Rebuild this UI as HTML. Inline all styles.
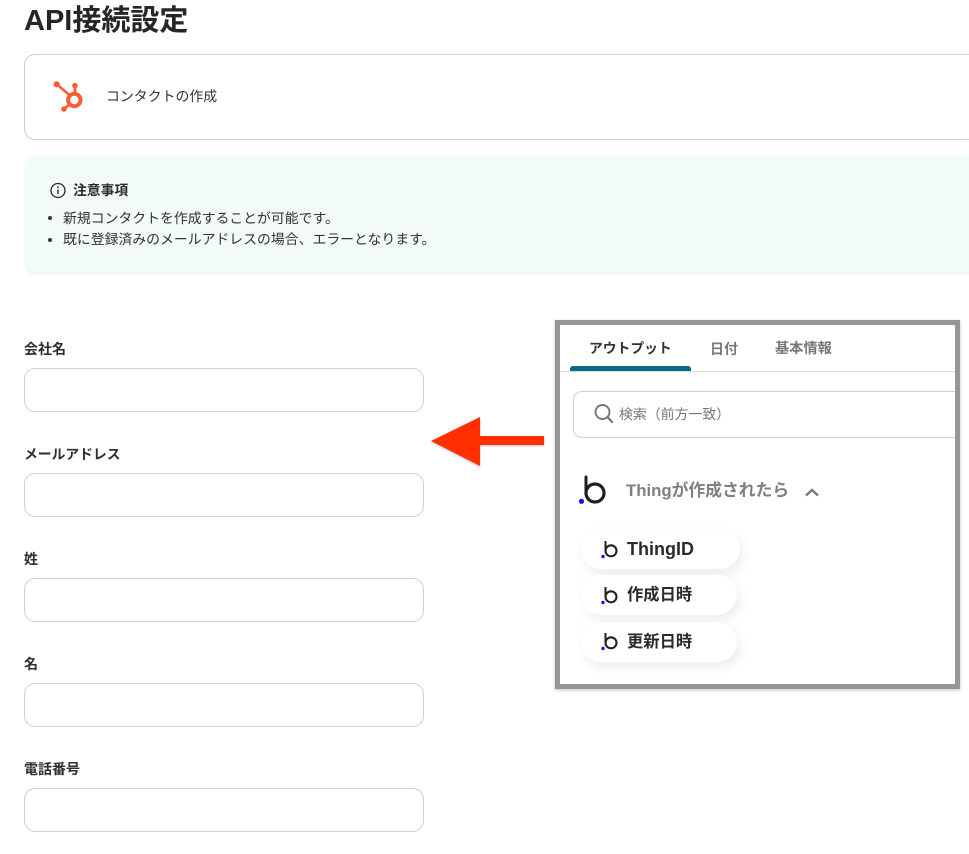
<!DOCTYPE html>
<html lang="ja"><head><meta charset="utf-8"><style>
*{box-sizing:border-box}
html,body{margin:0;padding:0}
body{width:969px;height:854px;overflow:hidden;background:#fff;position:relative;font-family:"Liberation Sans","Noto Sans CJK JP",sans-serif;color:#2b2b2b}
#w{position:absolute;left:0;top:0;width:969px;height:854px;filter:blur(.3px)}
.a{position:absolute;white-space:nowrap}
.lab{left:24px;font-size:14px;font-weight:700;line-height:18px;color:#2e2e2e}
.inp{position:absolute;left:24px;width:400px;height:44px;border:1px solid #cdd0d8;border-radius:11px;background:#fff}
.pill{position:absolute;left:581px;height:40px;border-radius:20px;background:#fff;box-shadow:3px 5px 12px rgba(0,0,0,.08)}
.pt{font-size:16.300px;font-weight:700;line-height:20px;color:#2a2a2a}
.li{left:63px;font-size:13.870px;line-height:20px;color:#333}
.tab{top:340px;font-size:14px;font-weight:700;line-height:18px;color:#777}
</style></head><body><div id="w">
<div class="a" style="left:24px;top:3px;font-size:29px;font-weight:700;line-height:36px;color:#262626">API接続設定</div>
<div class="a" style="left:24px;top:54px;width:980px;height:86px;border:1px solid #cccccc;border-radius:11px"></div>
<svg class="a" style="left:50px;top:78px" width="36" height="36" viewBox="0 0 36 36">
<g fill="none" stroke="#ff5c35" stroke-linecap="round">
<circle cx="24.300" cy="22" r="6.200" stroke-width="4"/>
<path d="M6.700 6.300 L20 17.500" stroke-width="2.600"/>
<path d="M25 7.700 V15" stroke-width="2.800"/>
<path d="M14 31 L20 26" stroke-width="2.600"/>
</g>
<g fill="#ff5c35"><circle cx="6.700" cy="6.300" r="3.100"/><circle cx="25" cy="7.700" r="2.800"/><circle cx="14" cy="31" r="2.800"/></g>
</svg>
<div class="a" style="left:106px;top:86px;font-size:13.900px;line-height:20px;color:#333">コンタクトの作成</div>
<div class="a" style="left:24px;top:156px;width:980px;height:119px;background:#f2fafa;border-radius:11px"></div>
<svg class="a" style="left:50px;top:182px" width="17" height="17" viewBox="0 0 17 17"><circle cx="8" cy="8.500" r="7" fill="none" stroke="#2b2b2b" stroke-width="1.300"/><rect x="7.300" y="7.500" width="1.400" height="4.500" fill="#2b2b2b"/><circle cx="8" cy="5.300" r=".9" fill="#2b2b2b"/></svg>
<div class="a" style="left:73px;top:182px;font-size:13.800px;font-weight:700;line-height:18px">注意事項</div>
<div class="a" style="left:48px;top:216px;width:4px;height:4px;border-radius:50%;background:#333"></div>
<div class="a li" style="top:208px">新規コンタクトを作成することが可能です。</div>
<div class="a" style="left:48px;top:238px;width:4px;height:4px;border-radius:50%;background:#333"></div>
<div class="a li" style="top:229px">既に登録済みのメールアドレスの場合、エラーとなります。</div>

<div class="a lab" style="top:340px">会社名</div><div class="inp" style="top:368px"></div>
<div class="a lab" style="top:446px;font-size:13.800px">メールアドレス</div><div class="inp" style="top:473px"></div>
<div class="a lab" style="top:550px">姓</div><div class="inp" style="top:578px"></div>
<div class="a lab" style="top:655px">名</div><div class="inp" style="top:683px"></div>
<div class="a lab" style="top:760px">電話番号</div><div class="inp" style="top:788px"></div>

<svg class="a" style="left:425px;top:410px" width="125" height="65" viewBox="0 0 125 65"><path d="M6 31 L55 7 V26 H119 V35 H55 V56 Z" fill="#ff2f00" style="filter:drop-shadow(0 1px 1px rgba(0,0,0,.25))"/></svg>

<div class="a" style="left:555px;top:320px;width:405px;height:369px;border:5px solid #969696;box-shadow:0 1px 3px rgba(0,0,0,.25);background:#fff;overflow:hidden"></div>
<div class="a tab" style="left:589px;color:#333;font-size:13.800px">アウトプット</div>
<div class="a tab" style="left:710px">日付</div>
<div class="a tab" style="left:775px;font-size:14.200px">基本情報</div>
<div class="a" style="left:560px;top:371px;width:395px;height:1px;background:#dcdcdc"></div>
<div class="a" style="left:570px;top:366px;width:121px;height:5px;background:#0a6b80;border-radius:3px 3px 0 0"></div>
<div class="a" style="left:573px;top:391px;width:382px;height:47px;border:1px solid #cfcfcf;border-right:0;border-radius:9px 0 0 9px"></div>
<svg class="a" style="left:592px;top:402px" width="24" height="24" viewBox="0 0 24 24"><circle cx="10.500" cy="10" r="7" fill="none" stroke="#777" stroke-width="1.900"/><path d="M15.500 15 L20 20" stroke="#777" stroke-width="2.200" stroke-linecap="round"/></svg>
<div class="a" style="left:619px;top:405px;font-size:13.900px;line-height:18px;color:#777">検索（前方一致）</div>

<svg class="a" style="left:576px;top:474px" width="32" height="32" viewBox="0 0 32 32"><path d="M10 3 V19" stroke="#1f1f1f" stroke-width="3" fill="none" stroke-linecap="round"/><circle cx="19" cy="19" r="9" fill="none" stroke="#1f1f1f" stroke-width="3.200"/><circle cx="5.500" cy="27.300" r="2.600" fill="#1414f0"/></svg>
<div class="a" style="left:626px;top:481px;font-size:16.800px;font-weight:700;line-height:20px;color:#808080">Thingが作成されたら</div>
<svg class="a" style="left:803px;top:485px" width="18" height="14" viewBox="0 0 18 14"><path d="M3 10.500 L9 5 L15 10.500" fill="none" stroke="#777" stroke-width="2.400"/></svg>

<div class="pill" style="top:529px;width:159px"></div>
<div class="pill" style="top:575px;width:156px"></div>
<div class="pill" style="top:622px;width:156px"></div>
<svg class="a" style="left:600px;top:540px" width="20" height="20" viewBox="0 0 20 20"><path d="M5.500 1 V11" stroke="#222" stroke-width="2" fill="none"/><circle cx="11" cy="10.800" r="5.500" fill="none" stroke="#222" stroke-width="2.100"/><circle cx="3" cy="16.500" r="1.700" fill="#1414f0"/></svg>
<svg class="a" style="left:600px;top:586px" width="20" height="20" viewBox="0 0 20 20"><path d="M5.500 1 V11" stroke="#222" stroke-width="2" fill="none"/><circle cx="11" cy="10.800" r="5.500" fill="none" stroke="#222" stroke-width="2.100"/><circle cx="3" cy="16.500" r="1.700" fill="#1414f0"/></svg>
<svg class="a" style="left:600px;top:632px" width="20" height="20" viewBox="0 0 20 20"><path d="M5.500 1 V11" stroke="#222" stroke-width="2" fill="none"/><circle cx="11" cy="10.800" r="5.500" fill="none" stroke="#222" stroke-width="2.100"/><circle cx="3" cy="16.500" r="1.700" fill="#1414f0"/></svg>
<div class="a pt" style="left:627px;top:539px;font-size:18px">ThingID</div>
<div class="a pt" style="left:627px;top:585px">作成日時</div>
<div class="a pt" style="left:627px;top:632px">更新日時</div>
</div></body></html>
